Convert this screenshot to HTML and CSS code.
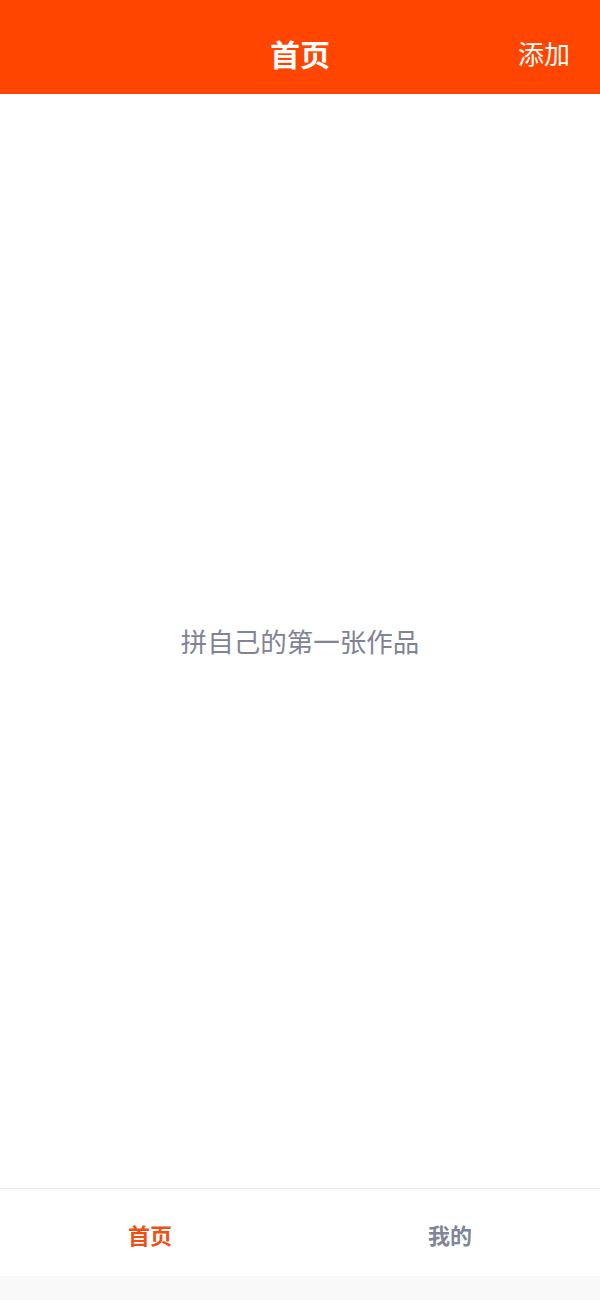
FILE: index.html
```html
<!DOCTYPE html>
<html lang="zh-CN">
<head>
<meta charset="utf-8">
<title>首页</title>
<link rel="stylesheet" href="styles.css">
</head>
<body>
<div class="app">
  <header class="topbar">
    <div class="topbar-side"></div>
    <h1 class="topbar-title">首页</h1>
    <div class="topbar-side topbar-action">添加</div>
  </header>
  <main class="content">
    <p class="empty-text">拼自己的第一张作品</p>
  </main>
  <nav class="tabbar">
    <div class="tab tab-active">首页</div>
    <div class="tab">我的</div>
  </nav>
  <div class="home-strip"></div>
</div>
</body>
</html>
```
FILE: styles.css
```css
* { box-sizing: border-box; }
html, body { margin: 0; padding: 0; }
body {
  font-family: "Noto Sans CJK SC", "Noto Sans", sans-serif;
  background: #ffffff;
}
.app {
  width: 600px;
  height: 1300px;
  display: flex;
  flex-direction: column;
}
.topbar {
  height: 94px;
  background: #ff4500;
  display: flex;
  align-items: center;
  padding: 12px 30px 0 30px;
}
.topbar-side {
  width: 80px;
}
.topbar-title {
  flex: 1;
  margin: 0;
  text-align: center;
  color: #ffffff;
  font-size: 30px;
  font-weight: 700;
  line-height: 1;
}
.topbar-action {
  text-align: right;
  color: #ffffff;
  font-size: 26px;
  line-height: 1;
}
.content {
  flex: 1;
  display: flex;
  align-items: center;
  justify-content: center;
}
.empty-text {
  margin: 0;
  color: #7f8395;
  font-size: 26.5px;
  line-height: 1;
}
.tabbar {
  height: 88px;
  border-top: 1px solid #e8e8e8;
  display: flex;
  padding-top: 3px;
}
.tab {
  flex: 1;
  display: flex;
  align-items: center;
  justify-content: center;
  font-size: 22px;
  font-weight: 700;
  color: #808597;
}
.tab-active {
  color: #ee5014;
}
.home-strip {
  height: 24px;
  background: #f9f9fa;
}
```
